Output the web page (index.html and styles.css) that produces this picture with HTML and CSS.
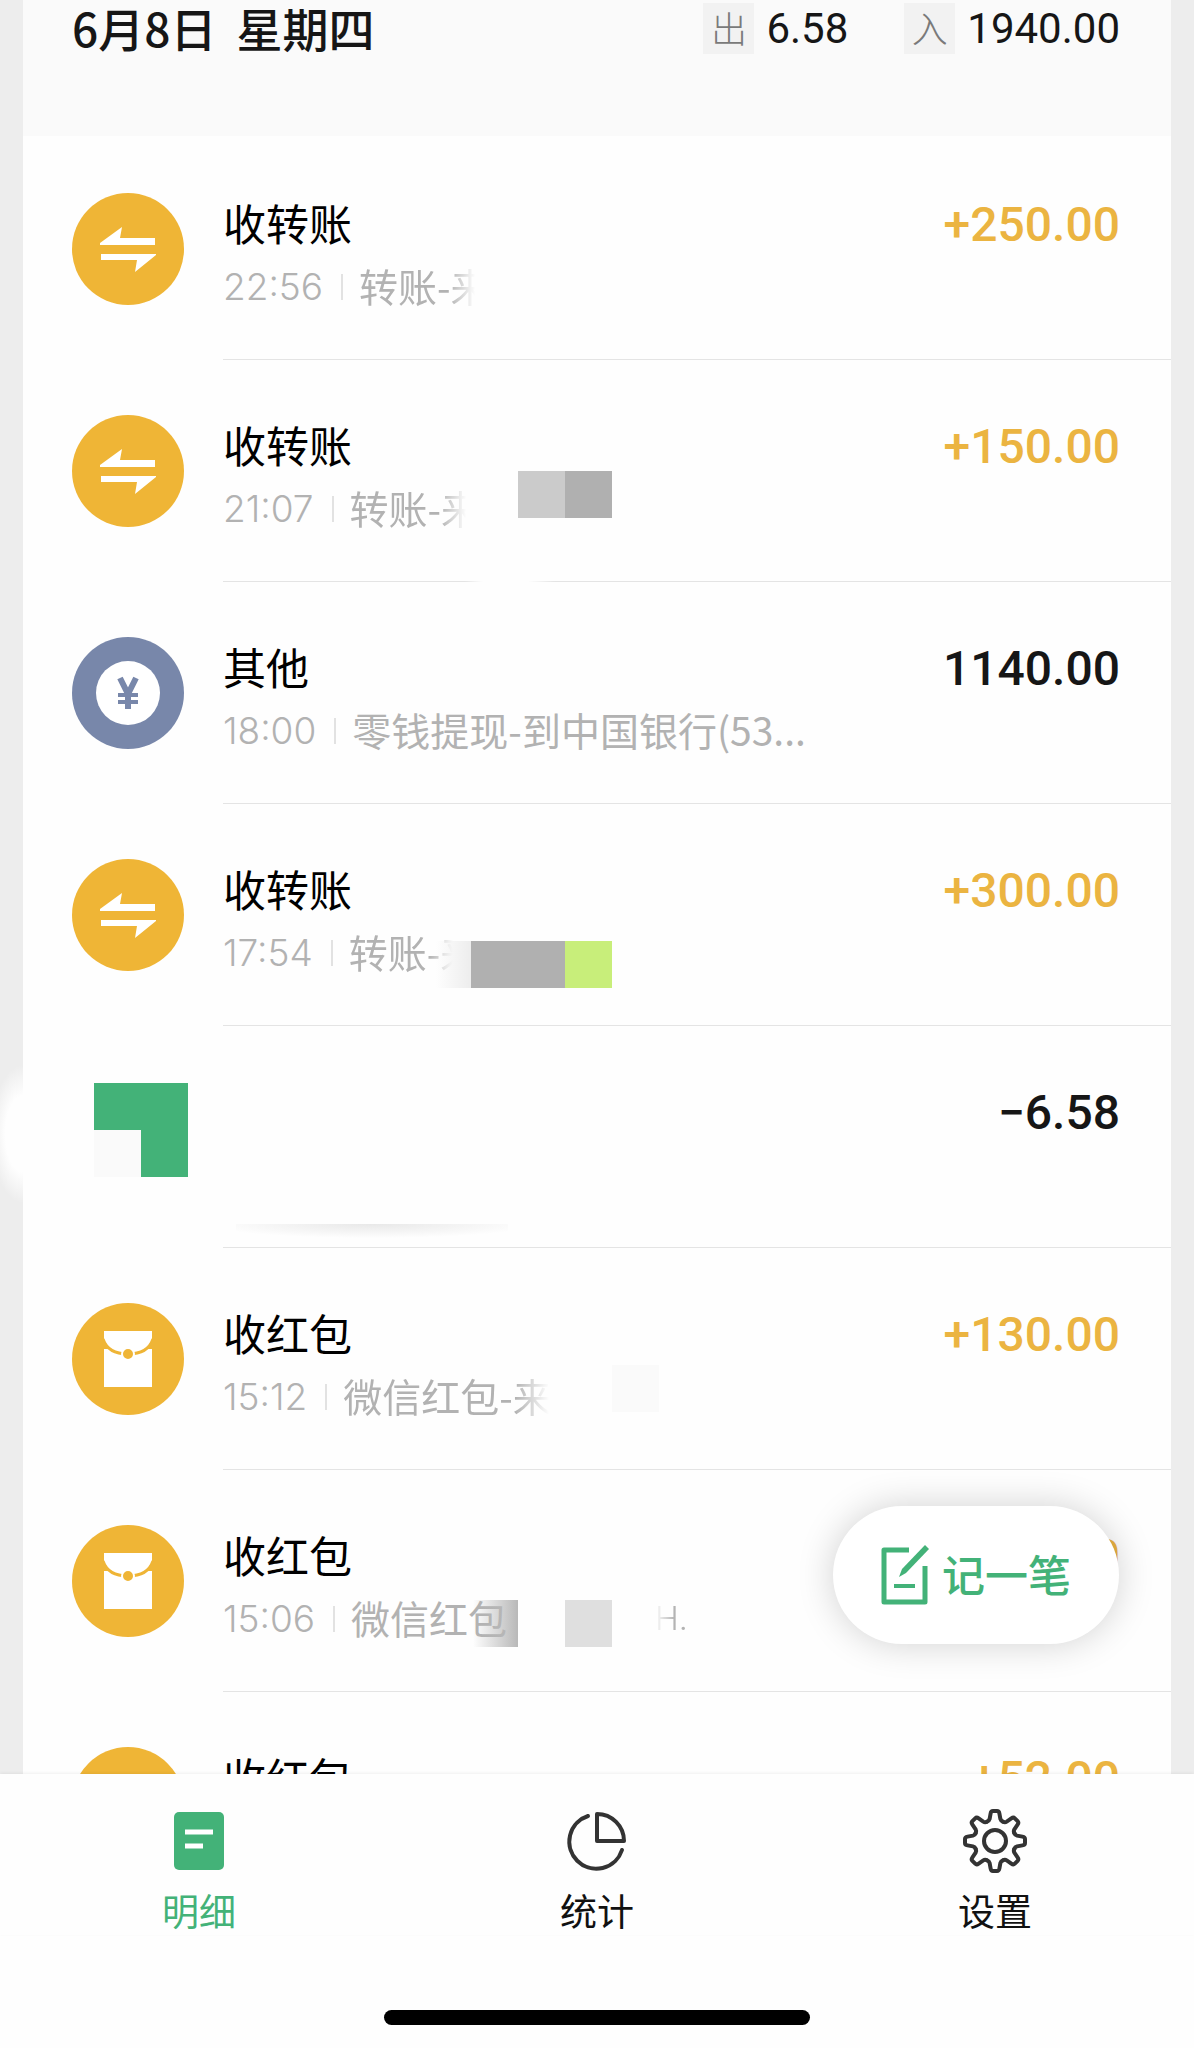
FILE: index.html
```html
<!DOCTYPE html>
<html lang="zh-CN">
<head>
<meta charset="utf-8">
<meta name="viewport" content="width=device-width, initial-scale=1">
<title>记账明细</title>
<link rel="stylesheet" href="styles.css">
</head>
<body>
<svg class="sprite" aria-hidden="true">
  <symbol id="transfer" viewBox="0 0 112 112">
    <circle cx="56" cy="56" r="56" fill="#efb536"/>
    <path fill="#fff" d="M28 52V50L50 34L48 45H83V52ZM29 61H84V62L63 79L65 67H29Z"/>
  </symbol>
  <symbol id="packet" viewBox="0 0 112 112">
    <circle cx="56" cy="56" r="56" fill="#efb536"/>
    <path fill="#fff" d="M32 28H80V84H32Z"/>
    <path fill="none" stroke="#efb536" stroke-width="3" d="M31 36Q36 51 56 51Q76 51 81 36"/>
    <circle cx="56" cy="51" r="6" fill="#efb536" stroke="#fff" stroke-width="2"/>
    <path fill="#efb536" d="M31 35L37 46H31ZM81 35L75 46H81Z"/>
  </symbol>
  <symbol id="other" viewBox="0 0 112 112">
    <circle cx="56" cy="56" r="56" fill="#7887aa"/>
    <circle cx="56" cy="56" r="32" fill="#fff"/>
    <path fill="none" stroke="#7887aa" stroke-width="6" d="M48 41L56 57L64 41M56 55V72"/>
    <path fill="none" stroke="#7887aa" stroke-width="4" d="M46 58H66M46 65H66"/>
  </symbol>
</svg>

<main class="ledger">
  <section class="day">
    <header class="day-head">
      <h1 class="date"><span>6月8日</span> <span>星期四</span></h1>
      <div class="total"><span class="tag">出</span><span>6.58</span></div>
      <div class="total"><span class="tag">入</span><span>1940.00</span></div>
    </header>
    <ul class="entries">
      <li class="entry">
        <svg class="icon"><use href="#transfer"/></svg>
        <div class="body">
          <div class="line"><span class="name">收转账</span><span class="amount in">+250.00</span></div>
          <div class="meta"><time>22:56</time><span class="note fade">转账-来</span></div>
        </div>
      </li>
      <li class="entry">
        <svg class="icon"><use href="#transfer"/></svg>
        <div class="body">
          <div class="line"><span class="name">收转账</span><span class="amount in">+150.00</span></div>
          <div class="meta"><time>21:07</time><span class="note fade">转账-来</span></div>
        </div>
        <span class="mosaic mosaic-pair"></span>
        <span class="mosaic rule-gap"></span>
      </li>
      <li class="entry">
        <svg class="icon"><use href="#other"/></svg>
        <div class="body">
          <div class="line"><span class="name">其他</span><span class="amount">1140.00</span></div>
          <div class="meta"><time>18:00</time><span class="note">零钱提现-到中国银行(53...</span></div>
        </div>
      </li>
      <li class="entry">
        <svg class="icon"><use href="#transfer"/></svg>
        <div class="body">
          <div class="line"><span class="name">收转账</span><span class="amount in">+300.00</span></div>
          <div class="meta"><time>17:54</time><span class="note fade fade-short">转账-来</span></div>
        </div>
        <span class="mosaic mosaic-lime"></span>
      </li>
      <li class="entry">
        <span class="icon"></span>
        <div class="body">
          <div class="line"><span class="name"></span><span class="amount">−6.58</span></div>
        </div>
        <span class="mosaic mosaic-green"></span>
        <span class="mosaic smudge"></span>
      </li>
      <li class="entry">
        <svg class="icon"><use href="#packet"/></svg>
        <div class="body">
          <div class="line"><span class="name">收红包</span><span class="amount in">+130.00</span></div>
          <div class="meta"><time>15:12</time><span class="note fade fade-long">微信红包-来</span></div>
        </div>
        <span class="mosaic mosaic-pale"></span>
      </li>
      <li class="entry">
        <svg class="icon"><use href="#packet"/></svg>
        <div class="body">
          <div class="line"><span class="name">收红包</span><span class="amount in">+200.00</span></div>
          <div class="meta"><time>15:06</time><span class="note">微信红包</span><span class="tail">H.</span></div>
        </div>
        <span class="mosaic mosaic-split"></span>
      </li>
      <li class="entry">
        <svg class="icon"><use href="#packet"/></svg>
        <div class="body">
          <div class="line"><span class="name">收红包</span><span class="amount in">+52.00</span></div>
        </div>
      </li>
    </ul>
  </section>
  <span class="edge-glow"></span>
  <button class="add" type="button">
    <svg width="50" height="60" viewBox="0 0 50 60" fill="none" stroke="currentColor" stroke-width="5" stroke-linejoin="round" aria-hidden="true">
      <path d="M28 5H3V57H44V21"/>
      <path d="M13 41H34" stroke-width="4"/>
      <path d="M44 0L48 4L25 28L18 32L21 24Z" fill="currentColor" stroke="none"/>
    </svg>
    <span class="add-label">记一笔</span>
  </button>
</main>

<nav class="tabs">
  <a class="tab active" href="#detail">
    <svg width="64" height="64" viewBox="-32 -32 64 64" aria-hidden="true">
      <rect x="-25" y="-29" width="50" height="58" rx="5" fill="#43b278"/>
      <path d="M-14 -9H14M-14 5H4" stroke="#fff" stroke-width="5"/>
    </svg>
    明细
  </a>
  <a class="tab" href="#stats">
    <svg width="64" height="64" viewBox="-32 -32 64 64" fill="none" stroke="#333" stroke-width="4" stroke-linecap="round" stroke-linejoin="round" aria-hidden="true">
      <path d="M-9 -25A27 27 0 1 0 25 9M0 -27A27 27 0 0 1 27 0H0Z"/>
    </svg>
    统计
  </a>
  <a class="tab" href="#settings">
    <svg width="64" height="64" viewBox="-32 -32 64 64" fill="none" stroke="#333" stroke-width="4" stroke-linecap="round" aria-hidden="true">
      <circle r="11"/>
      <path id="tooth" d="M-8 -19.3Q-5.9 -20 -5.4 -22L-4.4 -27.5Q-4 -30 -2 -30H2Q4 -30 4.4 -27.5L5.4 -22Q5.9 -20 8 -19.3"/>
      <use href="#tooth" transform="rotate(45)"/>
      <use href="#tooth" transform="rotate(90)"/>
      <use href="#tooth" transform="rotate(135)"/>
      <use href="#tooth" transform="rotate(180)"/>
      <use href="#tooth" transform="rotate(225)"/>
      <use href="#tooth" transform="rotate(270)"/>
      <use href="#tooth" transform="rotate(315)"/>
    </svg>
    设置
  </a>
</nav>
<div class="home-bar"><span></span></div>
</body>
</html>
```

FILE: styles.css
```css
* {
  box-sizing: border-box;
}

body {
  margin: 0;
  height: 100vh;
  display: flex;
  flex-direction: column;
  background: #fefefe;
  color: #000;
  font-family: Inter, "Noto Sans CJK SC", sans-serif;
}

.sprite {
  position: absolute;
  width: 0;
  height: 0;
}

.ledger {
  position: relative;
  flex: 1;
  min-height: 0;
  overflow: hidden;
  padding: 0 23px;
  background: #ededed;
}

.day {
  background: #fefefe;
}

.day-head {
  display: flex;
  align-items: flex-start;
  padding: 3px 51px 82px 49px;
  background: #fafafa;
  color: #161616;
}

.date {
  flex: 1;
  display: flex;
  gap: 20px;
  margin: 0;
  font: 500 46px/48px "Noto Sans CJK SC", sans-serif;
}

.total {
  display: flex;
  align-items: center;
  gap: 12px;
  margin-left: 56px;
  font: 400 42px/51px Roboto, sans-serif;
}

.tag {
  width: 51px;
  height: 51px;
  background: #f2f2f2;
  color: #7a7a7a;
  font: 300 36px/48px "Noto Sans CJK SC", sans-serif;
  text-align: center;
}

.entries {
  margin: 0;
  padding: 2px 0 0;
  list-style: none;
}

.entry {
  position: relative;
  display: flex;
  gap: 39px;
  min-height: 222px;
  padding-left: 49px;
}

.icon {
  flex: none;
  width: 112px;
  height: 112px;
  margin-top: 55px;
}

.body {
  flex: 1;
  min-width: 0;
  padding: 62px 51px 0 0;
  border-bottom: 1px solid #e4e4e4;
}

.line {
  display: flex;
  justify-content: space-between;
  height: 50px;
  line-height: 50px;
}

.name {
  font-family: "Noto Sans CJK SC", sans-serif;
  font-size: 43px;
  line-height: 44px;
}

.amount {
  color: #161616;
  font-family: Roboto, sans-serif;
  font-size: 48px;
  font-weight: 500;
}

.amount.in {
  color: #ebb441;
}

.meta {
  display: flex;
  align-items: flex-start;
  height: 50px;
  margin-top: 12px;
  color: #b2b2b2;
  font-size: 39px;
  line-height: 50px;
  white-space: nowrap;
}

.meta time {
  display: flex;
  align-items: center;
  font-size: 37px;
  font-weight: 300;
}

.meta time::after {
  content: "";
  width: 2px;
  height: 26px;
  margin: 0 16px 0 18px;
  background: #e2e2e2;
}

.note {
  font-family: "Noto Sans CJK SC", sans-serif;
  font-weight: 400;
  line-height: 46px;
}

.fade {
  mask-image: linear-gradient(90deg, #000 90px, transparent 116px);
}

.fade-short {
  mask-image: linear-gradient(90deg, #000 80px, transparent 104px);
}

.fade-long {
  mask-image: linear-gradient(90deg, #000 172px, transparent 206px);
}

.tail {
  margin-left: 148px;
  font-size: 32px;
  font-weight: 300;
  mask-image: linear-gradient(90deg, transparent, #000 20px);
}

/* Pixelated blocks that hide private details */
.mosaic {
  position: absolute;
  height: 47px;
}

.mosaic-pair {
  left: 495px;
  top: 111px;
  width: 94px;
  background: linear-gradient(90deg, #cbcbcb 50%, #b0b0b0 50%);
}

.rule-gap {
  left: 442px;
  top: 200px;
  width: 90px;
  height: 22px;
  background: linear-gradient(90deg, transparent, #fefefe 20%, #fefefe 70%, transparent);
}

.mosaic-lime {
  left: 413px;
  top: 137px;
  width: 176px;
  background: linear-gradient(90deg, transparent, #ededed 35px, #b0b0b0 35px 129px, #c8ee7a 129px);
}

.mosaic-green {
  left: 71px;
  top: 57px;
  width: 94px;
  height: 94px;
  background: conic-gradient(#43b278 180deg, #fafafa 180deg 270deg, #43b278 270deg);
}

.smudge {
  left: 213px;
  top: 198px;
  width: 272px;
  height: 14px;
  background: radial-gradient(ellipse 60% 100% at 50% 0, #e8e8e8, transparent);
}

.mosaic-pale {
  left: 589px;
  top: 117px;
  width: 47px;
  background: #fafafa;
}

.mosaic-split {
  left: 450px;
  top: 130px;
  width: 139px;
  background: linear-gradient(90deg, transparent, #b8b8b8 45px, transparent 45px 92px, #dfdfdf 92px);
}

.edge-glow {
  position: absolute;
  left: 0;
  top: 1065px;
  width: 23px;
  height: 138px;
  background: radial-gradient(ellipse 32px 69px at 100% 50%, #fefefe 55%, transparent);
}

.add {
  position: absolute;
  right: 75px;
  bottom: 130px;
  display: flex;
  align-items: center;
  justify-content: center;
  gap: 11px;
  width: 286px;
  height: 138px;
  padding: 0;
  border: 0;
  border-radius: 69px;
  background: #fff;
  box-shadow: 0 0 36px rgba(0, 0, 0, 0.18);
  color: #43b278;
  font: 500 43px/50px "Noto Sans CJK SC", sans-serif;
}

.add-label {
  padding-bottom: 4px;
}

.tabs {
  display: flex;
  position: relative;
  padding-top: 35px;
  background: #fefefe;
  box-shadow: 0 -1px 3px rgba(0, 0, 0, 0.06);
}

.tab {
  flex: 1;
  display: flex;
  flex-direction: column;
  align-items: center;
  gap: 12px;
  color: #111;
  font: 400 37px/50px "Noto Sans CJK SC", sans-serif;
  text-decoration: none;
}

.tab.active {
  color: #43b278;
}

.home-bar {
  display: flex;
  justify-content: center;
  padding: 75px 0 23px;
}

.home-bar span {
  width: 426px;
  height: 15px;
  border-radius: 8px;
  background: #000;
}
```
